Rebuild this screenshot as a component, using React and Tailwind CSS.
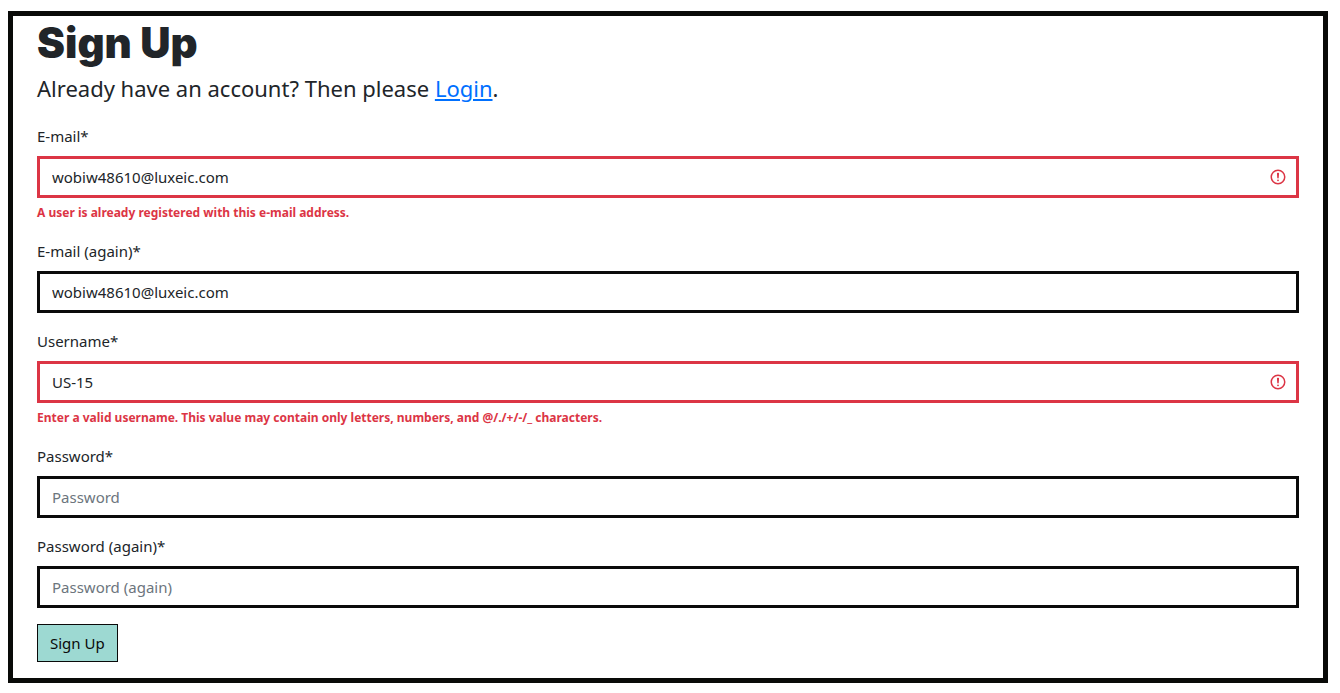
import React from "react";

const fields = [
  {
    id: "email",
    label: "E-mail*",
    type: "email",
    value: "wobiw48610@luxeic.com",
    error: "A user is already registered with this e-mail address.",
  },
  { id: "email2", label: "E-mail (again)*", type: "email", value: "wobiw48610@luxeic.com" },
  {
    id: "username",
    label: "Username*",
    type: "text",
    value: "US-15",
    error:
      "Enter a valid username. This value may contain only letters, numbers, and @/./+/-/_ characters.",
  },
  { id: "password1", label: "Password*", type: "password", placeholder: "Password" },
  { id: "password2", label: "Password (again)*", type: "password", placeholder: "Password (again)" },
];

function ErrorIcon() {
  return (
    <svg
      aria-hidden="true"
      className="pointer-events-none absolute top-1/2 right-3 size-[18px] -translate-y-1/2"
      viewBox="0 0 12 12"
      fill="none"
      stroke="#dc3545"
    >
      <circle cx="6" cy="6" r="4.5" />
      <path strokeLinejoin="round" d="M5.8 3.6h.4L6 6.5z" />
      <circle cx="6" cy="8.2" r=".6" fill="#dc3545" stroke="none" />
    </svg>
  );
}

function Field({ id, label, type, value, placeholder, error }) {
  return (
    <div className="mb-4">
      <label htmlFor={id} className="mb-2 block text-[15px] leading-6">
        {label}
      </label>
      <div className="relative">
        <input
          id={id}
          name={id}
          type={type}
          defaultValue={value}
          placeholder={placeholder}
          aria-invalid={error ? true : undefined}
          aria-describedby={error ? `${id}-error` : undefined}
          className={`block h-[42px] w-full border-3 bg-white px-3 text-[15px] leading-6 placeholder:text-[#6c757d] ${
            error ? "border-[#dc3545] pr-10" : "border-[#0a0a0a]"
          }`}
        />
        {error && <ErrorIcon />}
      </div>
      {error && (
        <p id={`${id}-error`} className="mt-1 text-xs leading-[21px] font-bold text-[#dc3545]">
          {error}
        </p>
      )}
    </div>
  );
}

export default function App() {
  return (
    <main className="mt-[11px] mr-3 mb-2 ml-2 border-5 border-[#090a08] bg-white px-6 pb-4 font-['Noto_Sans','Open_Sans',sans-serif] text-[#212529]">
      <h1 className="py-1 font-['Inter',sans-serif] text-[42px] leading-[46px] font-black">Sign Up</h1>
      <p className="mb-[18px] text-[22px] leading-9">
        Already have an account? Then please{" "}
        <a href="#login" className="text-[#0070ff] underline">
          Login
        </a>
        .
      </p>
      <form noValidate onSubmit={(e) => e.preventDefault()}>
        {fields.map((field) => (
          <Field key={field.id} {...field} />
        ))}
        <button
          type="submit"
          className="block h-[38px] border border-[#0a0a0a] bg-[#9dd9d2] px-3 text-[15px] leading-6 text-[#0a0a0a]"
        >
          Sign Up
        </button>
      </form>
    </main>
  );
}
